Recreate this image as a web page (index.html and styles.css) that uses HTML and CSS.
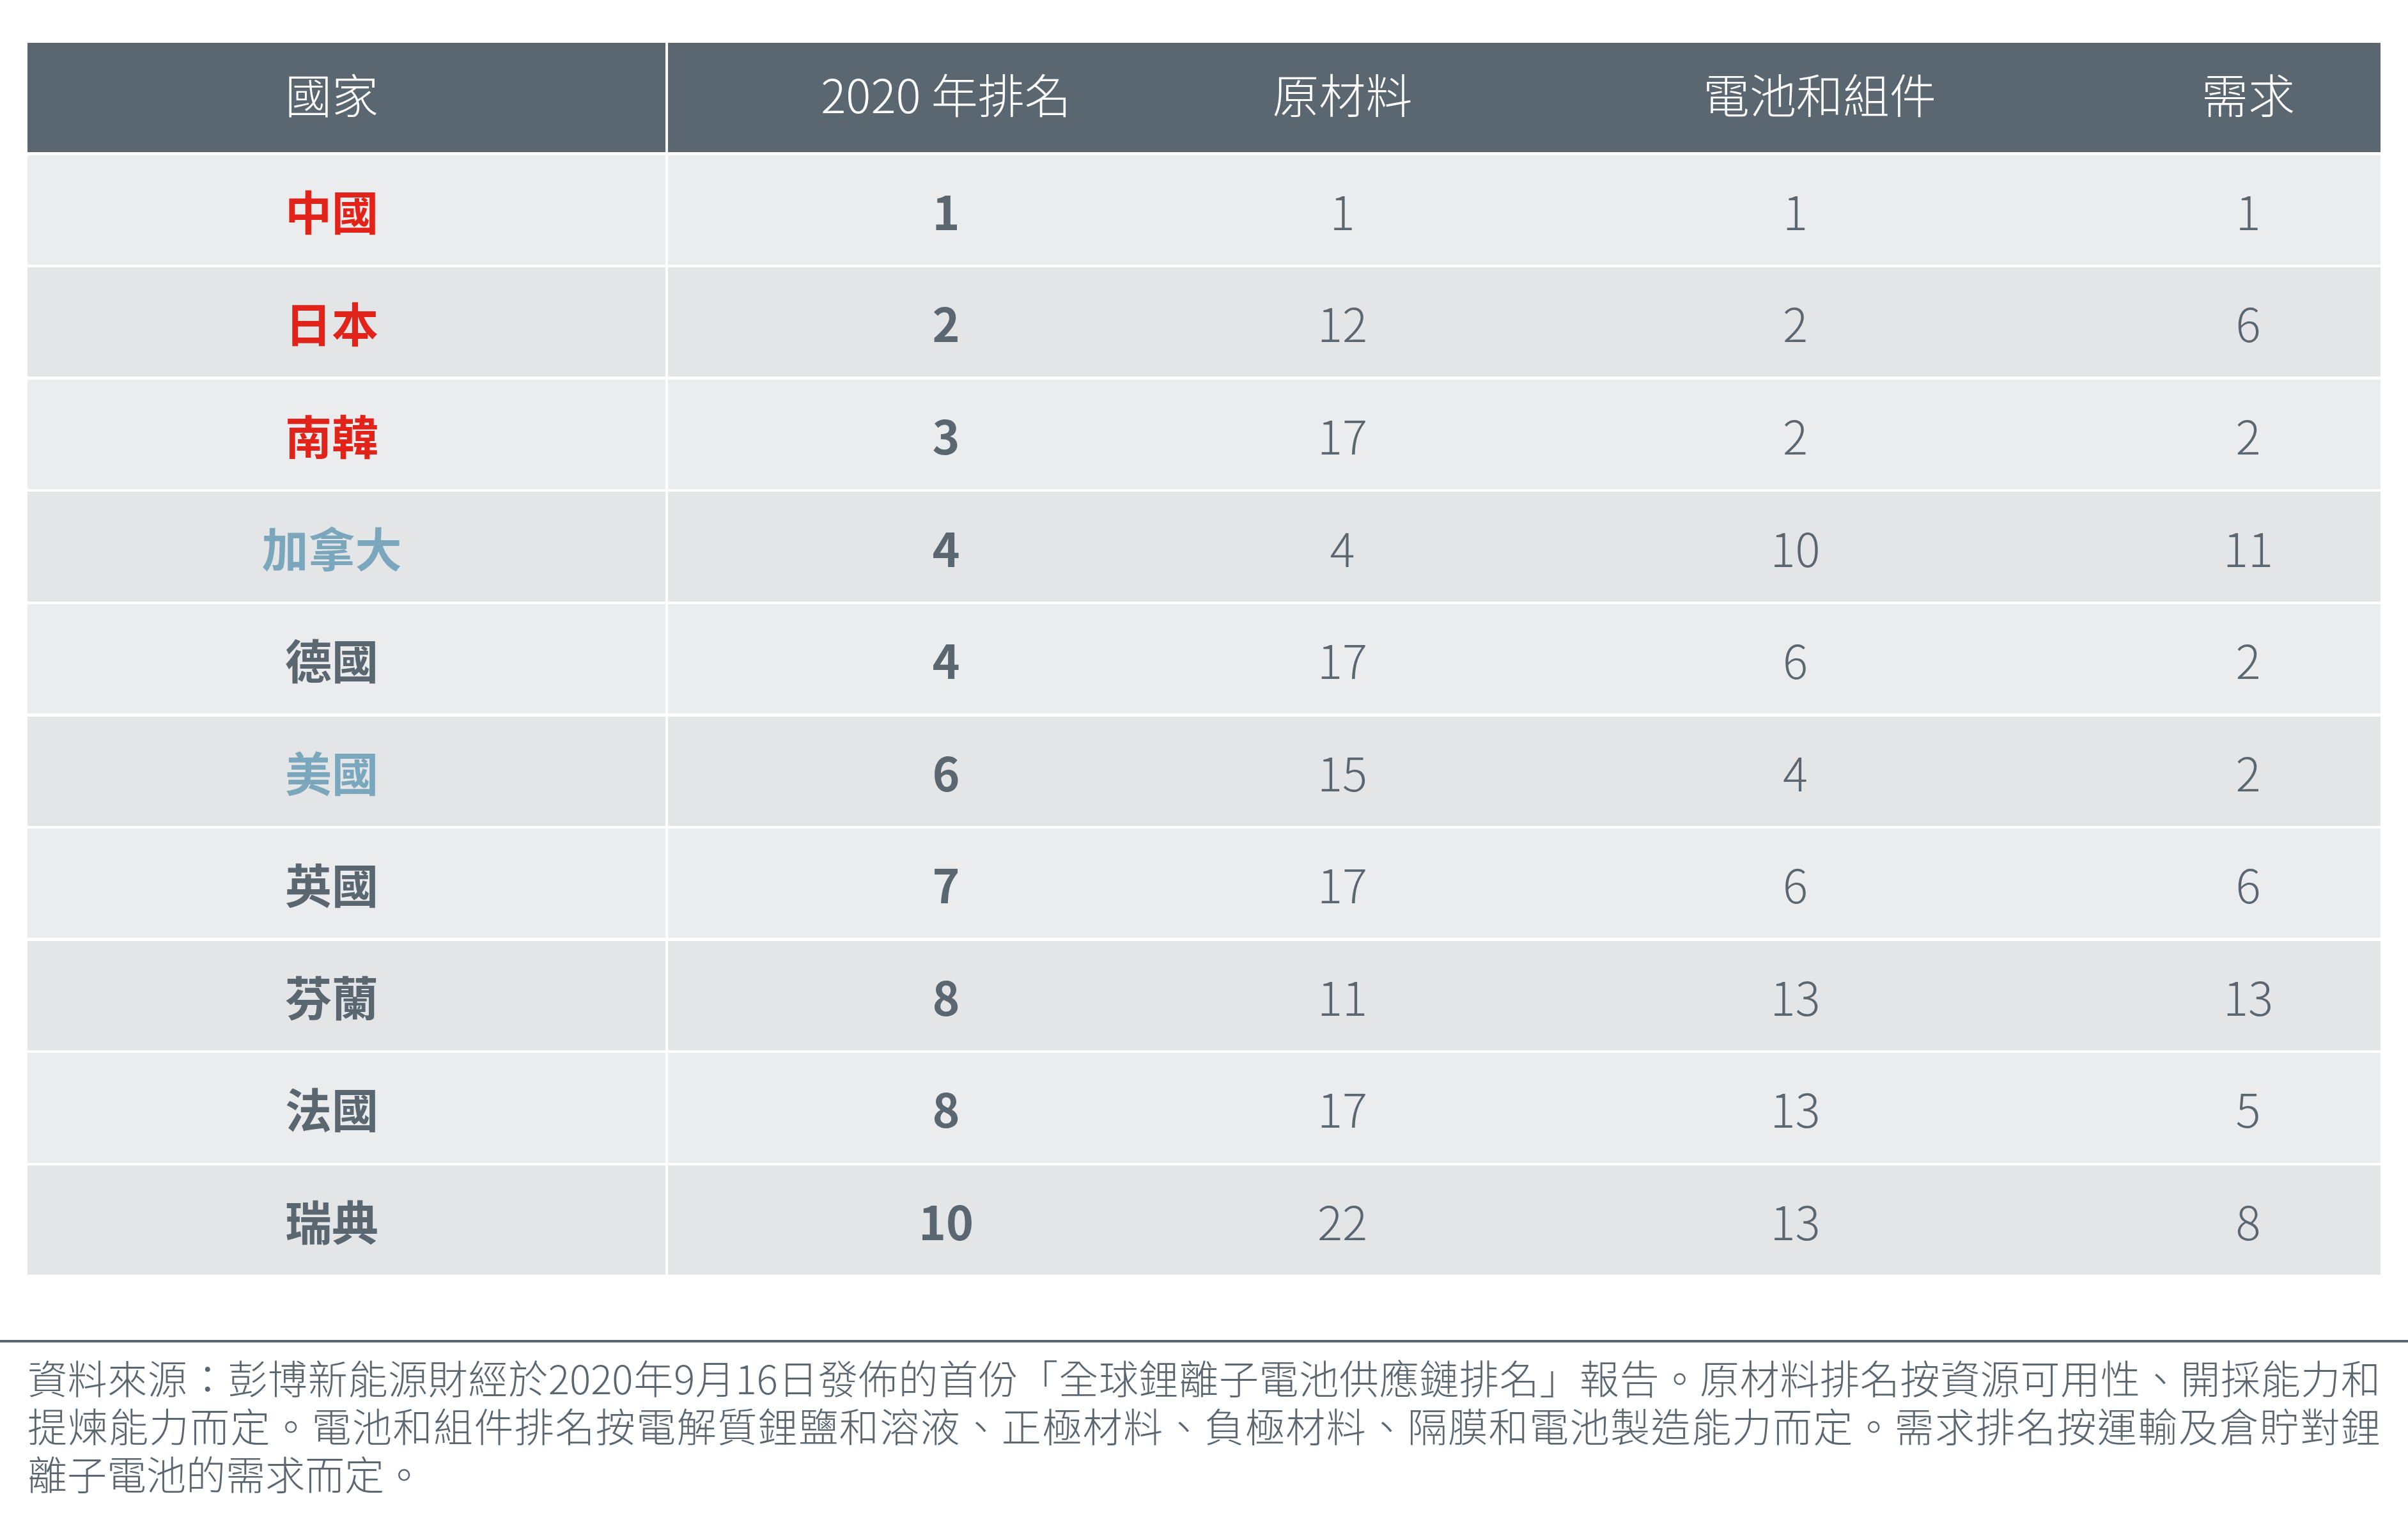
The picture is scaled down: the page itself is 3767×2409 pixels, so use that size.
FILE: index.html
```html
<!DOCTYPE html>
<html lang="zh-Hant">
<head>
<meta charset="utf-8">
<title>鋰離子電池供應鏈排名</title>
<link rel="stylesheet" href="styles.css">
</head>
<body>
<div class="page">
  <div class="table">
    <div class="row head">
      <div class="cell c1">國家</div>
      <div class="cell c2">2020 年排名</div>
      <div class="cell c3">原材料</div>
      <div class="cell c4">電池和組件</div>
      <div class="cell c5">需求</div>
    </div>
    <div class="row odd">
      <div class="cell c1 name red">中國</div>
      <div class="cell c2 rank">1</div>
      <div class="cell c3">1</div>
      <div class="cell c4">1</div>
      <div class="cell c5">1</div>
    </div>
    <div class="row even">
      <div class="cell c1 name red">日本</div>
      <div class="cell c2 rank">2</div>
      <div class="cell c3">12</div>
      <div class="cell c4">2</div>
      <div class="cell c5">6</div>
    </div>
    <div class="row odd">
      <div class="cell c1 name red">南韓</div>
      <div class="cell c2 rank">3</div>
      <div class="cell c3">17</div>
      <div class="cell c4">2</div>
      <div class="cell c5">2</div>
    </div>
    <div class="row even">
      <div class="cell c1 name blue">加拿大</div>
      <div class="cell c2 rank">4</div>
      <div class="cell c3">4</div>
      <div class="cell c4">10</div>
      <div class="cell c5">11</div>
    </div>
    <div class="row odd">
      <div class="cell c1 name">德國</div>
      <div class="cell c2 rank">4</div>
      <div class="cell c3">17</div>
      <div class="cell c4">6</div>
      <div class="cell c5">2</div>
    </div>
    <div class="row even">
      <div class="cell c1 name blue">美國</div>
      <div class="cell c2 rank">6</div>
      <div class="cell c3">15</div>
      <div class="cell c4">4</div>
      <div class="cell c5">2</div>
    </div>
    <div class="row odd">
      <div class="cell c1 name">英國</div>
      <div class="cell c2 rank">7</div>
      <div class="cell c3">17</div>
      <div class="cell c4">6</div>
      <div class="cell c5">6</div>
    </div>
    <div class="row even">
      <div class="cell c1 name">芬蘭</div>
      <div class="cell c2 rank">8</div>
      <div class="cell c3">11</div>
      <div class="cell c4">13</div>
      <div class="cell c5">13</div>
    </div>
    <div class="row odd">
      <div class="cell c1 name">法國</div>
      <div class="cell c2 rank">8</div>
      <div class="cell c3">17</div>
      <div class="cell c4">13</div>
      <div class="cell c5">5</div>
    </div>
    <div class="row even">
      <div class="cell c1 name">瑞典</div>
      <div class="cell c2 rank">10</div>
      <div class="cell c3">22</div>
      <div class="cell c4">13</div>
      <div class="cell c5">8</div>
    </div>
  </div>
  <div class="note">
    <div class="line just">資料來源：彭博新能源財經於2020年9月16日發佈的首份「全球鋰離子電池供應鏈排名」報告。原材料排名按資源可用性、開採能力和</div>
    <div class="line just">提煉能力而定。電池和組件排名按電解質鋰鹽和溶液、正極材料、負極材料、隔膜和電池製造能力而定。需求排名按運輸及倉貯對鋰</div>
    <div class="line">離子電池的需求而定。</div>
  </div>
</div>
</body>
</html>
```
FILE: styles.css
```css
html, body {
  margin: 0;
  padding: 0;
  background: #ffffff;
}

body {
  font-family: "Noto Sans CJK TC", "Noto Sans", sans-serif;
  color: #5b6770;
}

.page {
  padding-top: 67px;
}

.table {
  margin: 0 43px;
  display: grid;
  row-gap: 4.3px;
}

.row {
  display: grid;
  grid-template-columns: 1002px 870px 370px 1025px 414px;
  height: 171.3px;
}

.head {
  background: #5b6770;
  color: #ffffff;
}

.head .cell {
  padding-bottom: 14px;
}

.odd {
  background: #ebecee;
}

.even {
  background: #e4e5e7;
}

.cell {
  display: flex;
  align-items: center;
  justify-content: center;
  font-size: 73px;
  font-weight: 300;
  line-height: 1;
}

.c1 {
  border-right: 4px solid #ffffff;
  padding-right: 46px;
}

.row .c4 {
  padding-left: 22px;
}

.head .c4 {
  padding-left: 98px;
}

.name,
.rank {
  font-weight: 700;
}

.red {
  color: #e2231a;
}

.blue {
  color: #7ba7bd;
}

.note {
  margin-top: 102px;
  border-top: 4px solid #5b6770;
  padding: 17px 43px 0;
  font-size: 62px;
  font-weight: 300;
  line-height: 75px;
  color: #5b6770;
}

.line {
  white-space: nowrap;
}

.just {
  text-align: justify;
  text-align-last: justify;
  white-space: normal;
}
```
